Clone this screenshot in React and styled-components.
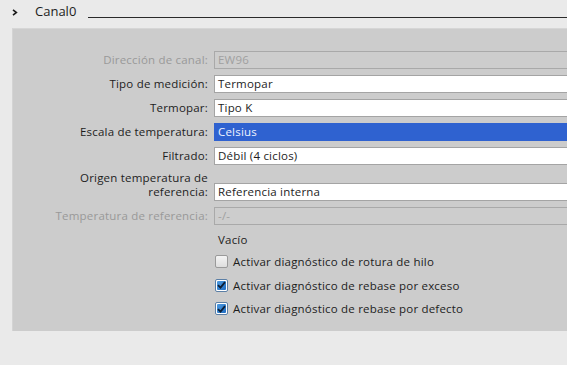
import React from "react";
import styled, { createGlobalStyle } from "styled-components";

const Global = createGlobalStyle`
  html, body { margin: 0; padding: 0; overflow: hidden; }
  body { background: #eaeaea; font-family: "Open Sans", "Noto Sans", sans-serif; }
`;

const Page = styled.div`
  width: 567px;
  height: 365px;
  background: #eaeaea;
  overflow: hidden;
`;

const Header = styled.div`
  display: flex;
  align-items: flex-start;
  height: 28px;
`;

const Chevron = styled.svg`
  width: 6px;
  height: 7px;
  margin: 9px 0 0 12px;
`;

const Title = styled.div`
  margin: 2px 0 0 17px;
  font-size: 13px;
  line-height: 18px;
  color: #1c1c1c;
`;

const Rule = styled.div`
  flex: 1;
  height: 1px;
  margin: 17px 0 0 12px;
  background: #2a2a2a;
`;

const Panel = styled.div`
  margin-left: 12px;
  width: 580px;
  height: 303px;
  background: #cccccc;
  border-top: 1px solid #d6d6d6;
  border-left: 1px solid #d4d4d4;
  box-sizing: border-box;
  padding-top: 22px;
`;

const Form = styled.div`
  display: grid;
  grid-template-columns: 195px 1fr;
  column-gap: 6px;
  row-gap: 6px;
  align-items: center;
`;

const Label = styled.div`
  text-align: right;
  font-size: 11.5px;
  line-height: 14px;
  letter-spacing: 0.2px;
  color: ${(p) => (p.$disabled ? "#999999" : "#1d1d1d")};
  align-self: ${(p) => (p.$tall ? "end" : "center")};
  padding-bottom: ${(p) => (p.$tall ? "2px" : "0")};
`;

const Field = styled.div`
  height: 18px;
  box-sizing: border-box;
  border: 1px solid ${(p) => (p.$selected ? "#2f62d0" : p.$disabled ? "#a9a9a9" : "#a4a4a4")};
  background: ${(p) => (p.$selected ? "#2f62d0" : p.$disabled ? "#cdcdcd" : "#ffffff")};
  color: ${(p) => (p.$selected ? "#eef3ff" : p.$disabled ? "#a0a0a0" : "#1d1d1d")};
  font-size: 11.5px;
  line-height: 16px;
  letter-spacing: 0.2px;
  padding-left: 3px;
  align-self: ${(p) => (p.$tall ? "end" : "center")};
  margin-top: ${(p) => (p.$tall ? "12px" : "0")};
`;

const Options = styled.div`
  display: flex;
  flex-direction: column;
  margin: 7px 0 0 202px;
`;

const Heading = styled.div`
  font-size: 11.5px;
  line-height: 16px;
  letter-spacing: 0.2px;
  color: #1d1d1d;
  margin: 0 0 2px 3px;
`;

const CheckRow = styled.label`
  display: flex;
  align-items: center;
  gap: 5px;
  height: 23.5px;
  font-size: 11.5px;
  letter-spacing: 0.2px;
  color: #1d1d1d;
`;

const Box = styled.span`
  width: 13px;
  height: 13px;
  box-sizing: border-box;
  border: 1px solid ${(p) => (p.$checked ? "#5b7fa6" : "#9a9a9a")};
  border-radius: 2px;
  background: ${(p) =>
    p.$checked
      ? "#ffffff"
      : "linear-gradient(#f4f4f4, #dedede)"};
  padding: 1px;
  display: flex;
`;

const BoxInner = styled.span`
  flex: 1;
  border-radius: 1px;
  background: linear-gradient(135deg, #4e9be0, #1f6cc2);
  display: flex;
  align-items: center;
  justify-content: center;
`;

function Check({ checked }) {
  return (
    <Box $checked={checked}>
      {checked && (
        <BoxInner>
          <svg width="9" height="8" viewBox="0 0 9 8">
            <path d="M1 4.2 L3.5 6.6 L8 1.2" fill="none" stroke="#0d1e33" strokeWidth="1.8" />
          </svg>
        </BoxInner>
      )}
    </Box>
  );
}

const rows = [
  { label: "Dirección de canal:", value: "EW96", disabled: true },
  { label: "Tipo de medición:", value: "Termopar" },
  { label: "Termopar:", value: "Tipo K" },
  { label: "Escala de temperatura:", value: "Celsius", selected: true },
  { label: "Filtrado:", value: "Débil (4 ciclos)" },
  { label: ["Origen temperatura de", "referencia:"], value: "Referencia interna", tall: true },
  { label: "Temperatura de referencia:", value: "-/-", disabled: true },
];

const checks = [
  { text: "Activar diagnóstico de rotura de hilo", checked: false },
  { text: "Activar diagnóstico de rebase por exceso", checked: true },
  { text: "Activar diagnóstico de rebase por defecto", checked: true },
];

export default function App() {
  return (
    <Page>
      <Global />
      <Header>
        <Chevron viewBox="0 0 6 7">
          <path d="M1 0.8 L4.4 3.5 L1 6.2" fill="none" stroke="#1a1a1a" strokeWidth="1.6" />
        </Chevron>
        <Title>Canal0</Title>
        <Rule />
      </Header>
      <Panel>
        <Form>
          {rows.map((r, i) => (
            <React.Fragment key={i}>
              <Label $disabled={r.disabled} $tall={r.tall}>
                {Array.isArray(r.label)
                  ? r.label.map((l, j) => <div key={j}>{l}</div>)
                  : r.label}
              </Label>
              <Field $disabled={r.disabled} $selected={r.selected} $tall={r.tall}>
                {r.value}
              </Field>
            </React.Fragment>
          ))}
        </Form>
        <Options>
          <Heading>Vacío</Heading>
          {checks.map((c, i) => (
            <CheckRow key={i}>
              <Check checked={c.checked} />
              {c.text}
            </CheckRow>
          ))}
        </Options>
      </Panel>
    </Page>
  );
}
